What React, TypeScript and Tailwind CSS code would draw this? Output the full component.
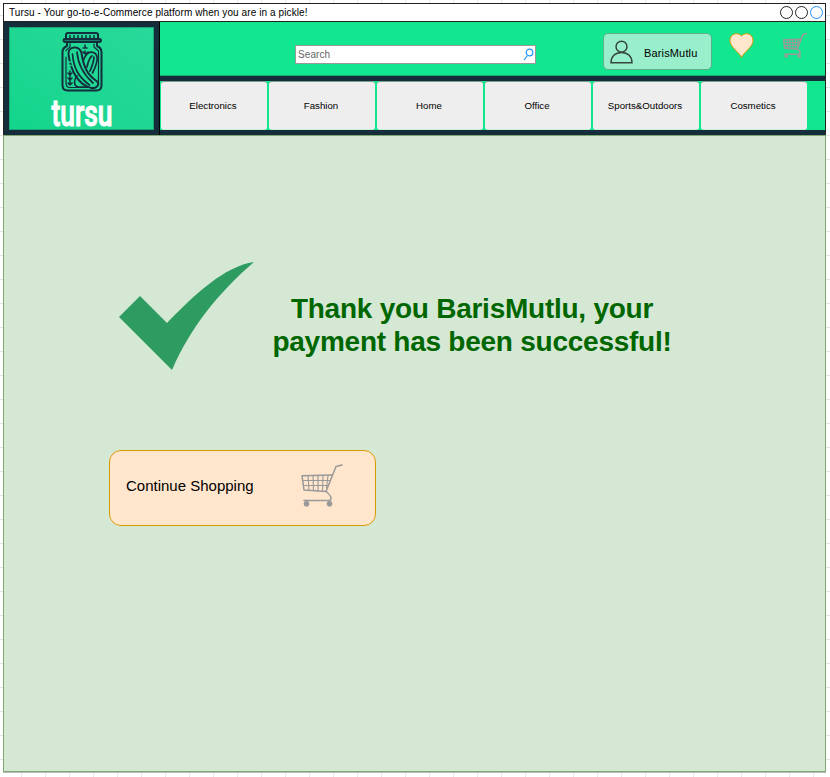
import React from "react";

const categories = ["Electronics", "Fashion", "Home", "Office", "Sports&Outdoors", "Cosmetics"];

function PickleJar() {
  return (
    <svg className="block h-[61px] w-[42px] shrink-0" viewBox="60 31 42 61" fill="none" stroke="#142d3c" strokeWidth="2" strokeLinecap="round" strokeLinejoin="round">
      <path d="M65 39v-4q0-2 2-2h28q2 0 2 2v4" />
      <rect x="62.500" y="39" width="37.500" height="3" rx="1.400" fill="#1a7a68" />
      <path d="M69 35.500v2.500M73 35.500v2.500M77 35.500v2.500M81 35.500v2.500M85 35.500v2.500M89 35.500v2.500M93 35.500v2.500" strokeWidth="1.500" />
      <path d="M66 43v3q-4.500 2-4.500 6v33q0 5.500 5 5.500h29q5 0 5-5.500V52q0-4-4.500-6v-3" />
      <path d="M69 43.500v3.500l-4 3.500M93 44v3l4.500 4v31q0 5-3 5.500H68q-3-.5-3-5V57" strokeWidth="1.200" />
      <path d="M67.500 54c-.5-8 11-9 13-1 2 14 6 22 15 28 4 3 0 8-5 7-13-3-21-17-23-34z" />
      <path d="M71.500 54c1 14 6 23 17 31M76 52c1 13 6 22 16 31" strokeWidth="1.700" />
      <path d="M82.500 60c3-8 7-9 11-7 5 3 2 12-2 20M86 67c1-5 2-9 5-11M89 71c2-5 4-9 4-14M76 76c-4 5-3 10 1 11h9M77.500 80l4 4" strokeWidth="1.700" />
      <path d="M84 45v2M82 48h4M84 51v3M82 52l2 2 3-2M69 71v13M67 73l2 2 2-2M67 78l2 2 2-2M67 83l2 2 2-2" strokeWidth="1.500" />
      <path d="M66.500 62h3M67 65.500h3" stroke="#20d995" strokeWidth="1.300" />
    </svg>
  );
}

function Cart({ className, stroke = 1.5 }: { className: string; stroke?: number }) {
  return (
    <svg className={className} viewBox="0 0 42 43" preserveAspectRatio="none" fill="none" stroke="#999" strokeWidth={stroke} strokeLinecap="round" strokeLinejoin="round">
      <path d="M41 1l-6 1.500-10 25q5 4 5 6.500T28 36.500H3" />
      <path d="M31 11L1 11.700 3 26l22 1.500" />
      <path d="M2 16.500h27M2.500 21.500h24.500M7 12l1 14M12 12l.5 14.500M17 12v15M22 12l-.5 15M27 11.500L25.500 24" strokeWidth={stroke * 0.75} />
      <circle cx="5.500" cy="39.800" r="2.800" fill="#999" stroke="none" />
      <circle cx="28.500" cy="39.800" r="2.800" fill="#999" stroke="none" />
    </svg>
  );
}

function TitleBar() {
  return (
    <div className="flex h-[18px] items-center justify-between border-b border-[#222] bg-white pl-[5px] pr-[2px]">
      <span className="text-[10px] leading-none tracking-[0.095px]">Tursu - Your go-to-e-Commerce platform when you are in a pickle!</span>
      <div className="flex gap-[2px]">
        <span className="size-[13px] rounded-full border border-[#222]" />
        <span className="size-[13px] rounded-full border border-[#222]" />
        <span className="size-[13px] rounded-full border border-[#1e90ff]" />
      </div>
    </div>
  );
}

function Header() {
  return (
    <header className="flex h-[113px] bg-[#152d3b]">
      <div className="w-[156px] shrink-0 border-r border-black pl-[5px] pt-[5px]">
        <div className="flex h-[103px] w-[145px] flex-col items-center border border-[#18a878] bg-linear-to-tr from-[#12d58c] to-[#28d99a] pt-[3px]">
          <PickleJar />
          <svg className="-mt-px h-[45px] w-[66px] shrink-0 overflow-visible" viewBox="0 0 66 45">
            <text x="2.500" y="34.500" textLength="61" lengthAdjust="spacingAndGlyphs" fill="white" stroke="white" strokeWidth="1.100" className="font-['Roboto',sans-serif] text-[36px] font-medium">tursu</text>
          </svg>
        </div>
      </div>
      <div className="flex grow flex-col">
        <div className="flex h-[54px] items-start border-b border-[#13ac73] bg-[#12e68f] pl-[135px]">
          <div className="mt-[23px] flex h-[19px] w-[241px] items-center justify-between border border-[#999] bg-white pl-[2px] pr-px">
            <span className="text-[10px] leading-none tracking-[0.1px] text-[#666]">Search</span>
            <svg className="h-[13px] w-[11px]" viewBox="0 0 11 13" fill="none" stroke="#2196ff" strokeWidth="1.200">
              <circle cx="6.500" cy="4.500" r="3.300" />
              <path d="M4.500 7.500L1 12" />
            </svg>
          </div>
          <div className="ml-[67px] mt-[11px] flex h-[37px] w-[109px] items-center rounded-[5px] border border-[#5fae8b] bg-[#99efcc] pl-[6px]">
            <svg className="h-[24px] w-[23px]" viewBox="0 0 23 24" fill="none" stroke="#36453e" strokeWidth="1.500">
              <circle cx="11.500" cy="6.700" r="5.500" />
              <path d="M1 22.700c0-6 4-10.300 10.500-10.300S22 16.700 22 22.700z" />
            </svg>
            <span className="ml-[11px] mt-[4px] text-[11px] leading-none tracking-[0.150px]">BarisMutlu</span>
          </div>
          <svg className="ml-[17px] mt-[11px] h-[25px] w-[25px]" viewBox="0 0 25 25">
            <path d="M12.500 24.300C9 18 1 14 1 7.500 1 0 9.500-1 12.500 3c3-4 11.500-3 11.500 4.500 0 6.500-8 10.500-11.500 16.800z" fill="#ffe6cc" stroke="#d79b00" />
          </svg>
          <Cart className="ml-[29px] mt-[11px] h-[25px] w-[24px]" stroke={2.8} />
        </div>
        <div className="mt-[5px] flex h-[49px] gap-[2px] bg-[#12e68f] pl-px">
          {categories.map((name) => (
            <div key={name} className="flex w-[106px] items-center justify-center rounded-[3px] border-y border-b-[#c5edda] border-t-[#779d8c] bg-[#eee] pr-[2px] text-[9.700px] leading-none">
              {name}
            </div>
          ))}
        </div>
      </div>
    </header>
  );
}

export default function App() {
  return (
    <div className="h-[777px] w-[830px] bg-white bg-[linear-gradient(to_right,#e3e3e3_1px,transparent_1px),linear-gradient(#e3e3e3_1px,transparent_1px)] bg-[length:24px_24px] bg-position-[21px_15px] pl-[3px] pt-[3px] font-['Liberation_Sans',Arial,sans-serif] text-black">
      <div className="h-[769px] w-[823px] bg-[#d5e8d4]">
        <div className="border border-b-0 border-[#222]">
          <TitleBar />
          <Header />
        </div>
        <main className="h-[637px] border border-[#82a574] shadow-[0_1px_0_#bbb]">
          <section className="flex pt-[126px]">
            <svg className="ml-[115px] h-[108px] w-[135px]" viewBox="0 0 135 108">
              <path d="M0 55L21 34l27 27C76 32 106 4 135 0 100 30 71 66 53 108z" fill="#2e9c60" />
            </svg>
            <h1 className="mt-[30px] w-[436px] text-center text-[28px] font-bold leading-[33px] tracking-[-0.250px] text-[#006600]">
              Thank you BarisMutlu, your<br />payment has been successful!
            </h1>
          </section>
          <button className="ml-[105px] mt-[80px] flex h-[76px] w-[267px] items-start rounded-[12px] border border-[#d79b00] bg-[#ffe6cc] pl-[16px] text-left">
            <span className="mt-[26px] w-[175px] text-[15px] leading-[18px]">Continue Shopping</span>
            <Cart className="mt-[13px] h-[43px] w-[42px]" />
          </button>
        </main>
      </div>
    </div>
  );
}
